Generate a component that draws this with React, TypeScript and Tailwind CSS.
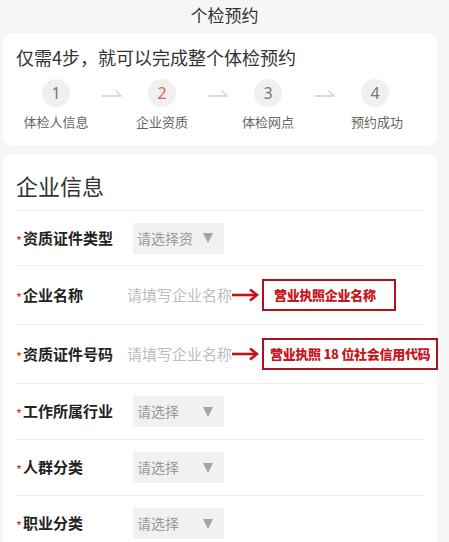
import React from 'react';

const font = { fontFamily: '"Noto Sans CJK SC", "Noto Sans", sans-serif' };

const steps = ['体检人信息', '企业资质', '体检网点', '预约成功'];

function StepArrow({ className }: { className: string }) {
  return (
    <svg className={className} width="20" height="10" viewBox="0 0 20 10" fill="none">
      <path d="M0 8 H19 L14 3" stroke="#cfcfcf" strokeWidth="1.3" strokeLinecap="round" strokeLinejoin="round" />
    </svg>
  );
}

function Circle({ n, active }: { n: number; active?: boolean }) {
  return (
    <div
      className={`flex h-[28px] w-[28px] shrink-0 items-center justify-center rounded-full bg-[#f0f0f0] text-[16px] leading-none ${
        active ? 'text-[#e0605a]' : 'text-[#777]'
      }`}
      style={{ fontFamily: '"Noto Sans", sans-serif' }}
    >
      {n}
    </div>
  );
}

function RedArrow() {
  return (
    <svg width="27" height="16" viewBox="0 0 27 16" fill="none" className="shrink-0">
      <path d="M0 8 H24" stroke="#c8101a" strokeWidth="2.6" />
      <path d="M18 2.5 L25 8 L18 13.5" stroke="#c8101a" strokeWidth="2.6" strokeLinejoin="miter" />
    </svg>
  );
}

function Label({ text, width }: { text: string; width: string }) {
  return (
    <div className={`flex shrink-0 items-center ${width}`}>
      <span className="mr-[1px] mt-[4px] text-[13px] leading-none text-[#c0392b]">*</span>
      <span className="text-[15px] font-bold text-[#222]">{text}</span>
    </div>
  );
}

function SelectRow({ label, value, h }: { label: string; value: string; h: string }) {
  return (
    <div className={`flex items-center border-b border-[#efefef] ${h}`}>
      <Label text={label} width="w-[117px]" />
      <div className="flex h-[31px] w-[91px] items-center justify-between bg-[#f1f1f1] pl-[4px] pr-[11px]">
        <span className="text-[14px] text-[#9a9a9a]">{value}</span>
        <svg width="10" height="10" viewBox="0 0 10 10">
          <path d="M0 0 H10 L5 10 Z" fill="#a5a5a5" />
        </svg>
      </div>
    </div>
  );
}

function InputRow({ label, note, h, boxW, pad }: { label: string; note: string; h: string; boxW: string; pad: string }) {
  return (
    <div className={`flex items-center border-b border-[#efefef] ${h}`}>
      <Label text={label} width="w-[111px]" />
      <span className="w-[105px] shrink-0 whitespace-nowrap text-[15px] text-[#bdbdbd]">请填写企业名称</span>
      <RedArrow />
      <div className={`ml-[3px] flex h-[32px] shrink-0 items-center border-2 border-[#a8141c] ${pad} ${boxW}`}>
        <span className="whitespace-nowrap text-[13px] font-black tracking-[-0.3px] text-[#c8161d]">{note}</span>
      </div>
    </div>
  );
}

export default function App() {
  return (
    <div className="h-[542px] w-full overflow-hidden bg-[#f6f6f6]" style={font}>
      <div className="flex h-[33px] justify-center text-[17px] leading-[30px] text-[#333]">个检预约</div>

      {/* steps card */}
      <div className="ml-[3px] h-[112px] w-[434px] rounded-[8px] bg-white pt-[12px]">
        <div className="pl-[13px] text-[18px] leading-[24px] text-[#333]">仅需4步，就可以完成整个体检预约</div>
        <div className="mt-[10px] flex items-center">
          <div className="ml-[39px]">
            <Circle n={1} />
          </div>
          <StepArrow className="ml-[32px]" />
          <div className="ml-[26px]">
            <Circle n={2} active />
          </div>
          <StepArrow className="ml-[32px]" />
          <div className="ml-[26px]">
            <Circle n={3} />
          </div>
          <StepArrow className="ml-[33px]" />
          <div className="ml-[26px]">
            <Circle n={4} />
          </div>
        </div>
        <div className="mt-[6px] grid grid-cols-[repeat(4,106px)]">
          {steps.map((s, i) => (
            <div key={s} className={`text-center text-[13px] leading-[18px] text-[#666] ${i === 3 ? 'pl-[6px]' : ''}`}>
              {s}
            </div>
          ))}
        </div>
      </div>

      {/* company info card */}
      <div className="ml-[3px] mt-[10px] w-[434px] rounded-t-[8px] bg-white pl-[13px] pr-[12px]">
        <div className="flex h-[56px] items-center border-b border-[#efefef] pt-[4px] text-[22px] leading-none text-[#333]">
          企业信息
        </div>
        <SelectRow label="资质证件类型" value="请选择资" h="h-[55px]" />
        <InputRow label="企业名称" note="营业执照企业名称" h="h-[59px]" boxW="w-[134px]" pad="pl-[10px]" />
        <InputRow label="资质证件号码" note="营业执照 18 位社会信用代码" h="h-[59px]" boxW="w-[176px]" pad="pl-[6px]" />
        <SelectRow label="工作所属行业" value="请选择" h="h-[56px]" />
        <SelectRow label="人群分类" value="请选择" h="h-[56px]" />
        <SelectRow label="职业分类" value="请选择" h="h-[56px]" />
      </div>
    </div>
  );
}
